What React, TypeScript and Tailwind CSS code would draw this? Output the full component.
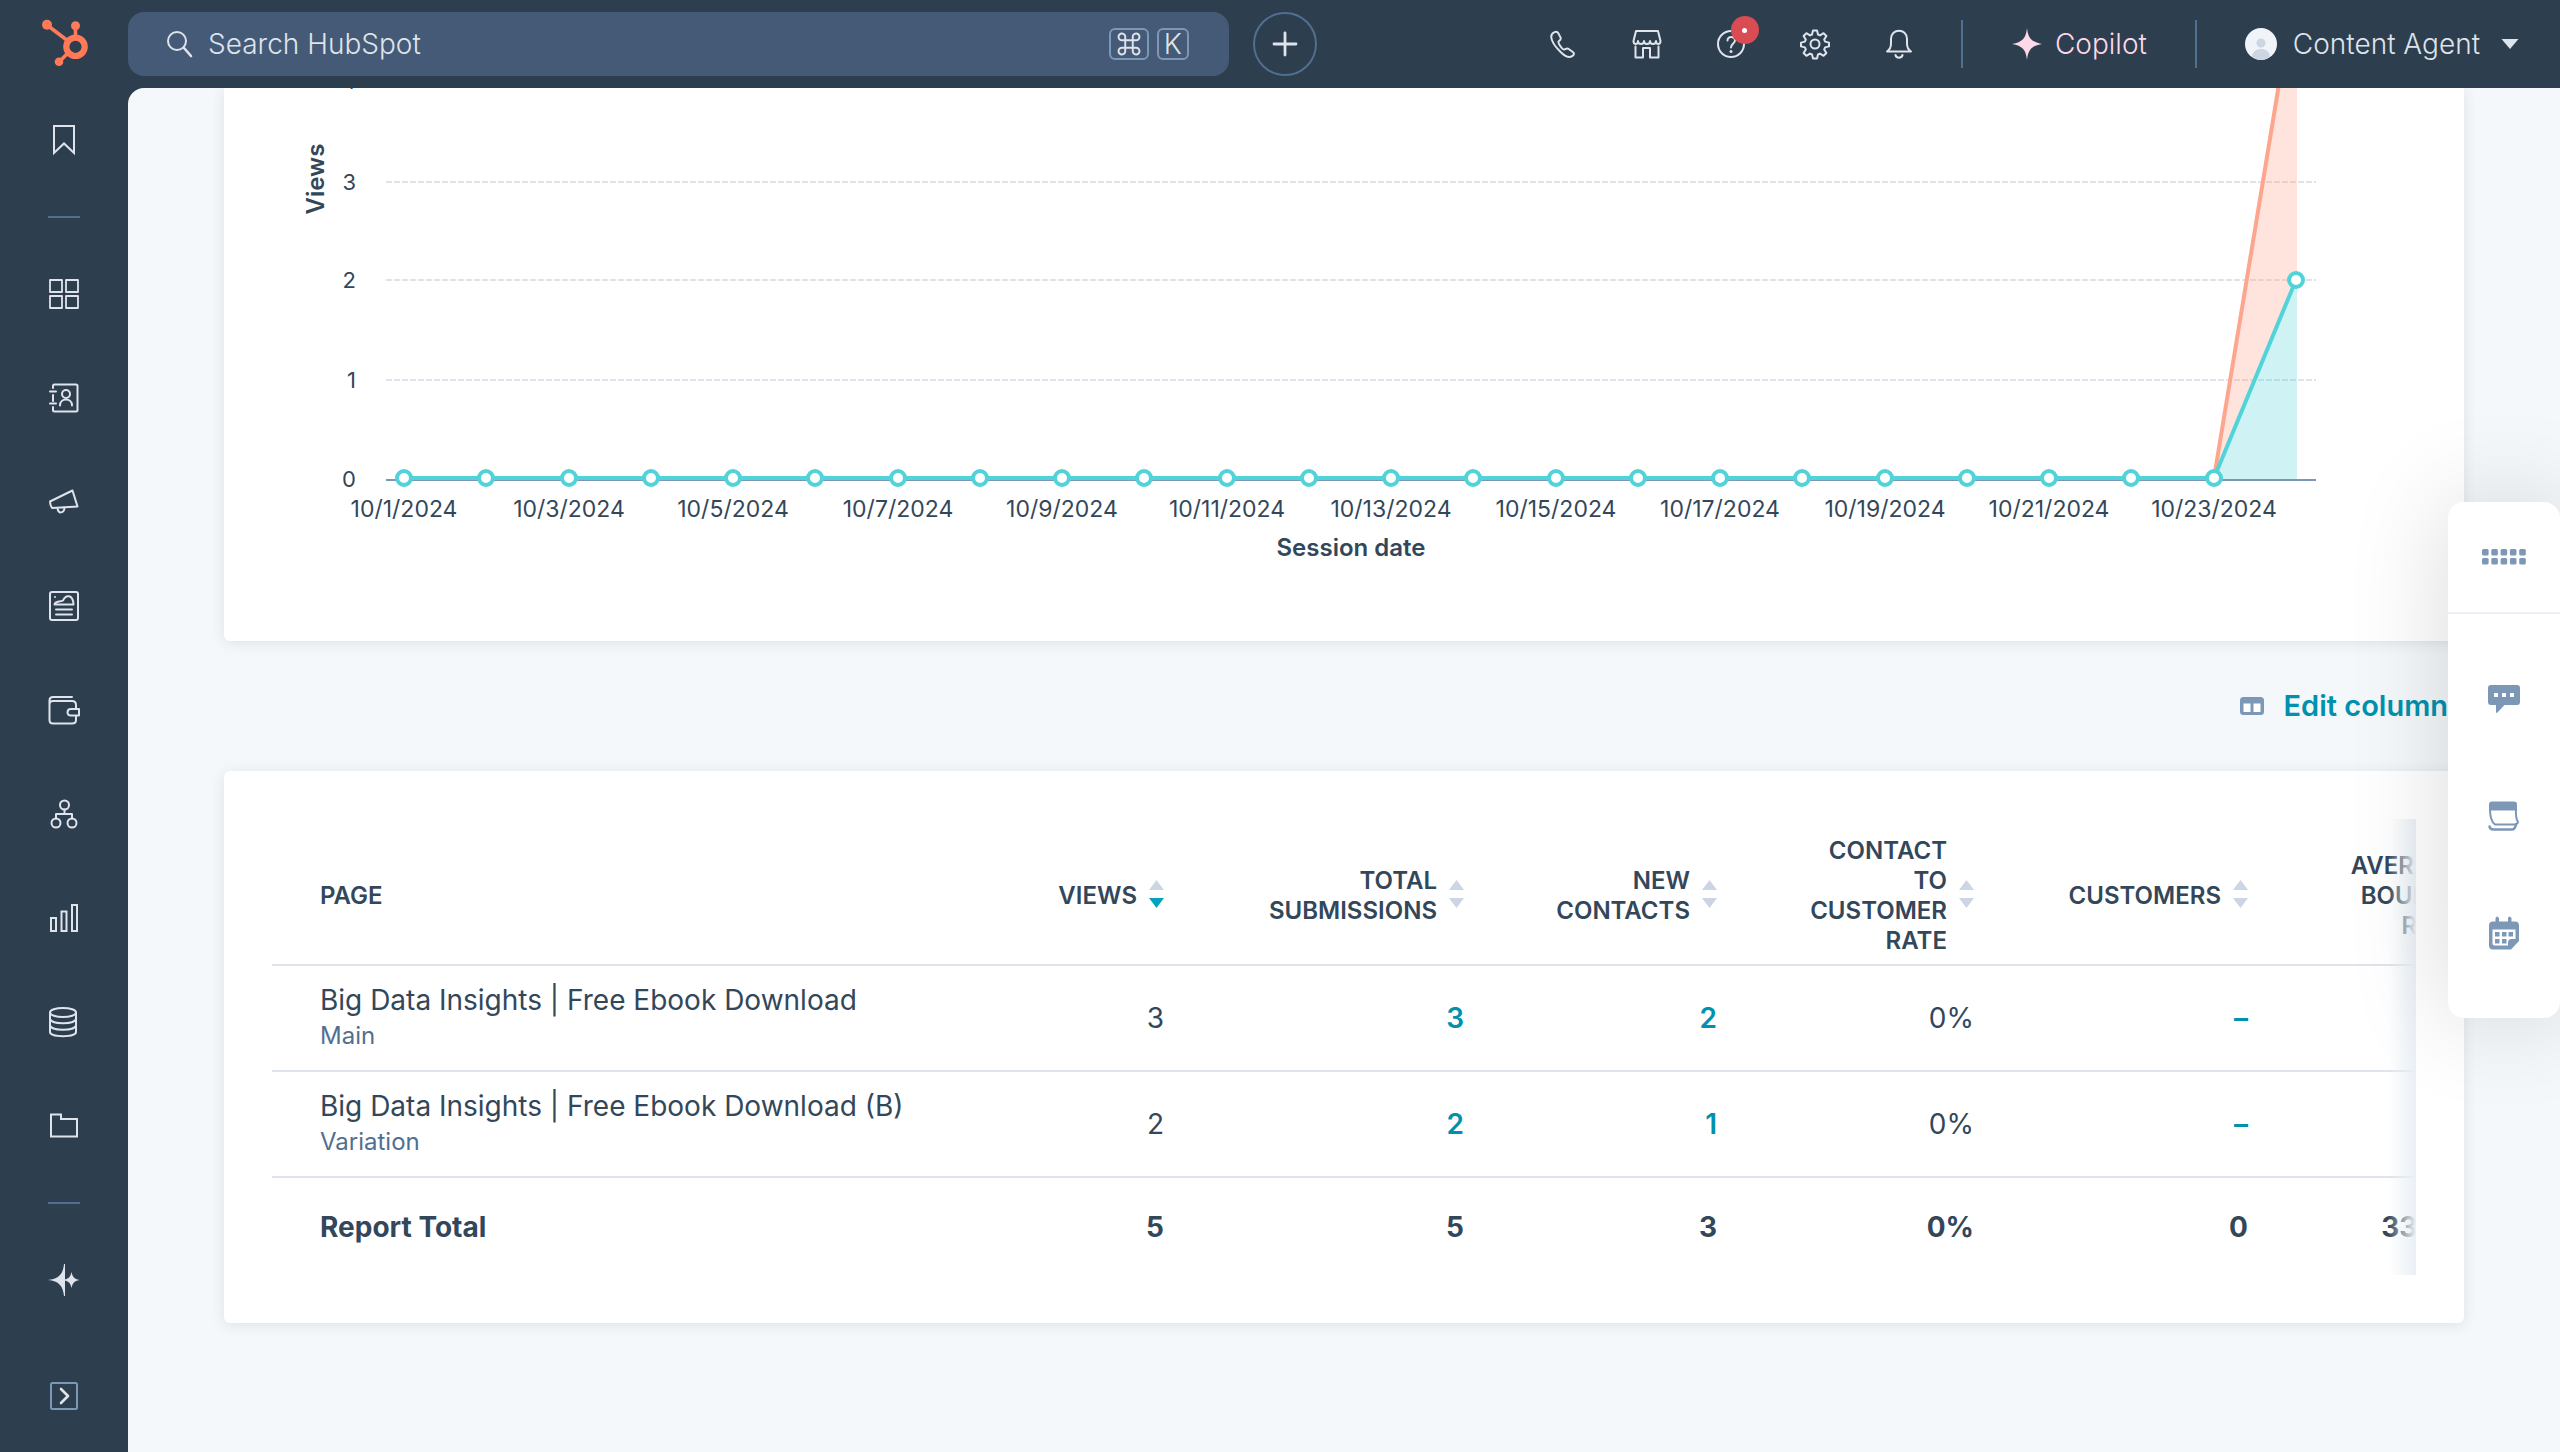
import type { ReactNode } from 'react'

const Icon = ({ children, size = 32 }: { children: ReactNode; size?: number }) => (
    <svg
        width={size}
        height={size}
        viewBox="0 0 32 32"
        fill="none"
        stroke="currentColor"
        strokeWidth="2"
        strokeLinejoin="round"
        strokeLinecap="round"
        aria-hidden="true"
    >
        {children}
    </svg>
)

const mainNav = [
    {
        label: 'Workspaces',
        icon: (
            <Icon>
                <path strokeWidth="1.8" d="M2 2h12v12H2zM18 2h12v12H18zM2 18h12v12H2zM18 18h12v12H18z" />
            </Icon>
        ),
    },
    {
        label: 'CRM',
        icon: (
            <Icon>
                <path d="M5 6V4q0-1.500 1.500-1.500H28q1.500 0 1.500 1.500v24q0 1.500-1.500 1.500H6.500Q5 29.500 5 28v-3M5 13v6M2 9.500h6M2 21.500h6" />
                <circle cx="18" cy="12" r="4" />
                <path d="M12 23.500c0-8 12-8 12 0" />
            </Icon>
        ),
    },
    {
        label: 'Marketing',
        icon: (
            <Icon>
                <path d="M2 15.500 24.500 4.500l5 16L4 22Q2 19 2 15.500ZM9.500 22.500c1 5.500 6.500 5 7-.5" />
            </Icon>
        ),
    },
    {
        label: 'Content',
        icon: (
            <Icon>
                <rect x="2" y="2" width="28" height="28" rx="2" />
                <path d="M6.500 14.500c1-4 5-2 8.500-4 3-6.500 10-6 10.500 4zM8 19.500h16M8 24.500h16" />
                <circle cx="7" cy="7" r="1" fill="currentColor" stroke="none" />
            </Icon>
        ),
    },
    {
        label: 'Commerce',
        icon: (
            <Icon>
                <path d="M24 3H5Q1.500 3 1.500 6.500V26q0 3.500 3.500 3.500h19q4 0 4-3.500v-4M28 14.500V11q0-4-4-4H5Q1.500 7 1.500 10" />
                <path d="M31 15h-8q-3.500 0-3.500 3.300T23 21.500h8z" />
            </Icon>
        ),
    },
    {
        label: 'Automations',
        icon: (
            <Icon>
                <circle cx="16.500" cy="7" r="4.500" />
                <circle cx="8" cy="25" r="4.500" />
                <circle cx="24" cy="25" r="4.500" />
                <path d="M16.500 11.500V16M8 20.500V16h16v4.500" />
            </Icon>
        ),
    },
    {
        label: 'Reporting',
        icon: (
            <Icon>
                <path strokeLinejoin="miter" d="M3 16h5v13H3zM13.500 9.500h5V29h-5zM24 3h5v26h-5z" />
            </Icon>
        ),
    },
    {
        label: 'Data Management',
        icon: (
            <Icon>
                <ellipse cx="15" cy="6.500" rx="13" ry="4.500" />
                <path d="M2 6.500V26c0 5.500 26 5.500 26 0V6.500M2 13c1 5.500 25 5.500 26 0M2 19.500c1 5.500 25 5.500 26 0" />
            </Icon>
        ),
    },
    {
        label: 'Library',
        icon: (
            <Icon>
                <path strokeLinejoin="miter" d="M3 4.500h10V9h16v17.500H3z" />
            </Icon>
        ),
    },
]

const NavButton = ({ label, children }: { label: string; children: ReactNode }) => (
    <button aria-label={label} className="flex h-26 w-full shrink-0 items-center justify-center">
        {children}
    </button>
)

const NavDivider = () => (
    <div className="flex h-[50px] shrink-0 items-center justify-center">
        <div className="h-[2px] w-8 bg-[#516f90]" />
    </div>
)

const Sidebar = () => {
    return (
        <nav className="flex w-32 shrink-0 flex-col text-[#dfe3eb]">
            <NavButton label="Bookmarks">
                <Icon>
                    <path strokeLinejoin="miter" d="M6 2h20v27l-10-9.500L6 29z" />
                </Icon>
            </NavButton>
            <NavDivider />
            {mainNav.map((item) => (
                <NavButton key={item.label} label={item.label}>
                    {item.icon}
                </NavButton>
            ))}
            <NavDivider />
            <NavButton label="Breeze">
                <Icon>
                    <path fill="currentColor" stroke="none" d="M0 16C11 15 15 10 16 0h1v32h-1C15 22 11 17 0 16Z" />
                    <path fill="currentColor" stroke="none" d="M16 15.500c5-.5 6.500-3 7.500-7.500 1 4.500 2.500 7 8 8-5.500 1-7 3.500-8 8-1-4.500-2.500-7-7.500-7.500z" />
                </Icon>
            </NavButton>
            <div className="flex flex-1 items-center justify-center pt-2">
                <button aria-label="Expand menu">
                    <Icon>
                        <rect x="3" y="3" width="26" height="26" rx="1.500" stroke="#7c98b6" />
                        <path strokeWidth="2.600" d="m13 9 7 7-7 7" />
                    </Icon>
                </button>
            </div>
        </nav>
    )
}

const Logo = () => (
    <svg width="50" height="52" viewBox="40 18 50 52" fill="none" stroke="#ff7a59" aria-hidden="true">
        <circle cx="76.500" cy="46.800" r="9.200" strokeWidth="6.200" />
        <path strokeWidth="3.600" d="M48 25l21 16M76.500 26v12M60 62l9-9" />
        <circle cx="48" cy="24.700" r="5" fill="#ff7a59" stroke="none" />
        <circle cx="76.500" cy="25.800" r="4.500" fill="#ff7a59" stroke="none" />
        <circle cx="60" cy="61.800" r="4.300" fill="#ff7a59" stroke="none" />
    </svg>
)

const HeaderButton = ({ label, children }: { label: string; children: ReactNode }) => (
    <button aria-label={label} className="relative flex h-16 w-21 items-center justify-center">
        {children}
    </button>
)

const Header = () => {
    return (
        <header className="flex h-22 shrink-0 items-center text-[28px] font-light text-[#dfe3eb]">
            <a href="#home" aria-label="Home" className="flex w-32 shrink-0 justify-center">
                <Logo />
            </a>
            <div className="flex h-16 w-[43%] items-center gap-3 rounded-2xl bg-[#445a76] pr-10 pl-9">
                <label htmlFor="search">
                    <Icon>
                        <circle cx="13" cy="13" r="9" />
                        <path strokeWidth="2.600" d="m20 20 7 8" />
                    </Icon>
                </label>
                <input
                    id="search"
                    aria-label="Search HubSpot"
                    placeholder="Search HubSpot"
                    className="min-w-0 flex-1 bg-transparent outline-none placeholder:text-[#dfe3eb]"
                />
                <div className="flex gap-2">
                    <kbd className="flex h-8 w-10 items-center justify-center rounded-md border-2 border-[#7c98b6]">
                        <Icon size={24}>
                            <path
                                strokeWidth="2.600"
                                d="M11 11h10v10H11zM11 11H7a4.500 4.500 0 1 1 4-4zM21 11V7a4.500 4.500 0 1 1 4 4zM21 21h4a4.500 4.500 0 1 1-4 4zM11 21v4a4.500 4.500 0 1 1-4-4z"
                            />
                        </Icon>
                    </kbd>
                    <kbd className="flex h-8 w-8 items-center justify-center rounded-md border-2 border-[#7c98b6] font-[Inter,sans-serif] text-[28px] leading-8">
                        K
                    </kbd>
                </div>
            </div>
            <button
                aria-label="Create"
                className="ml-6 flex h-16 w-16 items-center justify-center rounded-full border-2 border-[#516f90]"
            >
                <Icon>
                    <path strokeWidth="2.800" d="M16 5v22M5 16h22" />
                </Icon>
            </button>
            <div className="ml-auto flex items-center pr-10">
                <HeaderButton label="Calling">
                    <Icon>
                        <path d="M7.500 4.200c2-1 3-.4 4 1.400l2 3.800c.7 1.600.2 2.500-1.600 3.700-1 .8-.6 2 1 4.400 1.700 2.500 3.400 4.500 4.600 4 1.700-.8 2.800-1.600 4.200-.5l4.400 3.200c1.500 1.200.8 3-1 4-3 1.800-7 .3-11.500-4.200C8 18.500 4.500 13 4.200 9c0-2.400 1-3.800 3.300-4.800Z" />
                    </Icon>
                </HeaderButton>
                <HeaderButton label="Marketplaces">
                    <Icon>
                        <path d="M5 3h22l2.500 10c0 4-4.500 4-4.500 0 0 4-6 4-6 0 0 4-6 4-6 0 0 4-6 4-6 0 0 4-4.500 4-4.500 0zM4.500 18.500v11H12V20h7v9.500h8.500v-11" />
                    </Icon>
                </HeaderButton>
                <HeaderButton label="Help">
                    <Icon>
                        <circle cx="16" cy="16" r="13" />
                        <path d="M12.500 12.500c0-5 7.500-4.500 7.500 0 0 3-4 3-4 7" />
                        <circle cx="16" cy="23.500" r="1.500" fill="currentColor" stroke="none" />
                    </Icon>
                    <span className="absolute top-1 right-[14px] flex h-7 w-7 items-center justify-center rounded-full bg-[#d94c53]">
                        <span className="h-[5px] w-[5px] rounded-full bg-white" />
                    </span>
                </HeaderButton>
                <HeaderButton label="Settings">
                    <Icon>
                        <circle cx="16" cy="16" r="4.500" />
                        <path d="M14 2.500h4l1 4 2 .9 3.600-2.200 2.800 2.800-2.200 3.600.9 2 3.900 1v3.800l-3.900 1-.9 2 2.200 3.600-2.800 2.800-3.600-2.200-2 .9-1 4h-4l-1-4-2-.9-3.600 2.200-2.800-2.800 2.200-3.600-.9-2-3.900-1v-3.800l3.900-1 .9-2L4.600 8l2.800-2.800L11 7.400l2-.9z" />
                    </Icon>
                </HeaderButton>
                <HeaderButton label="Notifications">
                    <Icon>
                        <path d="M4 23.500h24c-3-2-4-4-4-8V11c0-11-16-11-16 0v4.500c0 4-1 6-4 8ZM12.500 27c.5 3.500 6.500 3.500 7 0" />
                    </Icon>
                </HeaderButton>
                <div className="ml-5 h-12 w-[2px] bg-[#516f90]" />
                <button className="mx-12 flex items-center gap-3 text-[#fcd9e7]">
                    <Icon>
                        <path fill="currentColor" stroke="none" d="M16 0c1.200 10.500 4.500 14 15 16-10.500 2-13.800 5.500-15 16C14.800 21.500 11.500 18 1 16 11.500 14 14.800 10.500 16 0Z" />
                    </Icon>
                    Copilot
                </button>
                <div className="h-12 w-[2px] bg-[#516f90]" />
                <button className="ml-12 flex items-center gap-4">
                    <svg width="32" height="32" viewBox="0 0 32 32" aria-hidden="true">
                        <circle cx="16" cy="16" r="16" fill="#f0f4f8" />
                        <circle cx="16" cy="15" r="4.500" fill="#cbd6e2" />
                        <path fill="#cbd6e2" d="M7 28.500C8 18.500 24 18.500 25 28.500 20 33 12 33 7 28.500Z" />
                    </svg>
                    <span>Content Agent</span>
                    <svg width="20" height="12" viewBox="0 0 20 12" className="ml-1" aria-hidden="true">
                        <path fill="currentColor" d="M1.500 1h17L10 11z" />
                    </svg>
                </button>
            </div>
        </header>
    )
}

const AXIS_Y = 391
const points = Array.from({ length: 24 }, (_, i) => ({
    x: Math.round(180 + i * 82.26),
    y: i === 23 ? AXIS_Y - 199 : AXIS_Y - 1,
}))
const gridLines = [
    { value: 3, y: 94 },
    { value: 2, y: 192 },
    { value: 1, y: 292 },
]

const ViewsChart = () => {
    return (
        <section className="rounded-b-md bg-white shadow-[0_2px_14px_rgba(45,62,80,0.12)]">
            <svg viewBox="0 0 2240 553" className="block h-auto w-full" fontFamily="Inter, sans-serif" fill="#33475b">
                <text x="100" y="91" textAnchor="middle" fontSize="24" fontWeight="600" transform="rotate(-90 100 91)">
                    Views
                </text>
                <text x="132" y="1" textAnchor="end" fontSize="22">4</text>
                {gridLines.map((line) => (
                    <g key={line.value}>
                        <text x="132" y={line.y + 8} textAnchor="end" fontSize="22">
                            {line.value}
                        </text>
                        <path d={`M162 ${line.y}H2092`} stroke="#dfe3eb" strokeWidth="2" strokeDasharray="6 2" />
                    </g>
                ))}
                <text x="132" y={AXIS_Y + 8} textAnchor="end" fontSize="22">0</text>
                <path d="M1991 391 2073 -107V192z" fill="#fea58e" fillOpacity="0.3" />
                <path d="M1991 391 2073 192V391z" fill="#51d3d9" fillOpacity="0.28" />
                <path d="M162 392H2092" stroke="#7c98b6" strokeWidth="2" />
                <path d="M1990 390 2072 -107" stroke="#fea58e" strokeWidth="4" />
                <path d={'M' + points.map((p) => `${p.x} ${p.y}`).join('L')} fill="none" stroke="#51d3d9" strokeWidth="4" />
                {points.map((p, i) => (
                    <g key={p.x}>
                        <circle cx={p.x} cy={p.y} r="7" fill="#fff" stroke="#51d3d9" strokeWidth="4" />
                        {i % 2 === 0 && (
                            <text x={p.x} y="429" textAnchor="middle" fontSize="23">
                                10/{i + 1}/2024
                            </text>
                        )}
                    </g>
                ))}
                <text x="1127" y="468" textAnchor="middle" fontSize="24" fontWeight="600">
                    Session date
                </text>
            </svg>
        </section>
    )
}

const SortArrows = ({ down }: { down?: boolean }) => (
    <svg width="15" height="28" viewBox="0 0 15 28" className="mb-1 shrink-0" fill="#cbd6e2" aria-hidden="true">
        <path d="M7.500 0 15 10H0z" />
        <path d="M0 18h15L7.500 28z" fill={down ? '#00a4bd' : '#cbd6e2'} />
    </svg>
)

const columns = [
    { lines: ['Views'], width: 'w-[206px]', sorted: true },
    { lines: ['Total', 'Submissions'], width: 'w-[300px]' },
    { lines: ['New', 'Contacts'], width: 'w-[253px]' },
    { lines: ['Contact', 'to', 'Customer', 'Rate'], width: 'w-[257px]' },
    { lines: ['Customers'], width: 'w-[274px]' },
    { lines: ['Average', 'Bounce', 'Rate'], width: 'w-[242px]' },
]

const rows = [
    { name: 'Big Data Insights | Free Ebook Download', type: 'Main', cells: ['3', '3', '2', '0%', '–', ''] },
    { name: 'Big Data Insights | Free Ebook Download (B)', type: 'Variation', cells: ['2', '2', '1', '0%', '–', ''] },
]
const totals = ['5', '5', '3', '0%', '0', '33.33%']
const linkColumns = [1, 2, 4]

const PagesTable = () => {
    return (
        <section className="rounded-md bg-white p-12 shadow-[0_2px_14px_rgba(45,62,80,0.12)]">
            <div className="relative overflow-hidden">
                <table className="w-[2266px] table-fixed text-[#33475b]">
                    <thead>
                        <tr className="h-[146px] border-b-2 border-[#dfe3eb] text-2xl uppercase">
                            <th className="px-12 pt-2 text-left leading-[30px] font-semibold">Page</th>
                            {columns.map((col) => (
                                <th key={col.lines.join(' ')} className={`${col.width} pt-2 pr-12 font-semibold`}>
                                    <button className="flex w-full items-center justify-end gap-3 text-right leading-[30px] uppercase">
                                        <span>
                                            {col.lines.map((line) => (
                                                <span key={line} className="block">
                                                    {line}
                                                </span>
                                            ))}
                                        </span>
                                        <SortArrows down={col.sorted} />
                                    </button>
                                </th>
                            ))}
                        </tr>
                    </thead>
                    <tbody>
                        {rows.map((row) => (
                            <tr key={row.name} className="h-[106px] border-b-2 border-[#dfe3eb] text-[28px]">
                                <td className="px-12">
                                    <div className="leading-9">{row.name}</div>
                                    <div className="text-2xl leading-9 text-[#516f90]">{row.type}</div>
                                </td>
                                {row.cells.map((cell, i) => (
                                    <td key={i} className="pr-12 text-right">
                                        {linkColumns.includes(i) ? (
                                            <a href="#contacts" className="font-semibold text-[#0091ae]">
                                                {cell}
                                            </a>
                                        ) : (
                                            cell
                                        )}
                                    </td>
                                ))}
                            </tr>
                        ))}
                    </tbody>
                    <tfoot>
                        <tr className="h-[98px] text-[28px] font-bold">
                            <td className="px-12">Report Total</td>
                            {totals.map((total, i) => (
                                <td key={i} className="pr-12 text-right">
                                    {total}
                                </td>
                            ))}
                        </tr>
                    </tfoot>
                </table>
                <div className="absolute inset-y-0 right-0 w-7 bg-linear-to-r from-[#eaf0f6]/0 to-[#eaf0f6]" />
            </div>
        </section>
    )
}

const ToolPanel = () => {
    return (
        <aside className="absolute top-[502px] right-0 flex w-28 flex-col items-center rounded-2xl bg-white text-[#7c98b6] shadow-[0_0_100px_rgba(0,0,0,0.15)]">
            <button aria-label="Move panel" className="flex h-28 w-full items-center justify-center border-b-2 border-[#eaf0f6]">
                <svg width="44" height="16" viewBox="0 0 44 16" fill="currentColor" aria-hidden="true">
                    {[0, 9.300, 18.600, 27.900, 37.200].map((x) => (
                        <g key={x}>
                            <rect x={x} y="0" width="6.600" height="6.600" rx="1.500" />
                            <rect x={x} y="9" width="6.600" height="6.600" rx="1.500" />
                        </g>
                    ))}
                </svg>
            </button>
            <div className="flex flex-col gap-[69px] py-[61px]">
                <button aria-label="Chat" className="flex h-12 items-center">
                    <svg width="32" height="28" viewBox="0 0 32 28" fill="currentColor" aria-hidden="true">
                        <path d="M3 0h26q3 0 3 3v14q0 3-3 3H16.500l-7 7.500q-1.500 1-1.500-.5v-7H3q-3 0-3-3V3q0-3 3-3Z" />
                        <path fill="#fff" d="M6 8h4v4H6zM14 8h4v4h-4zM22 8h4v4h-4z" />
                    </svg>
                </button>
                <button aria-label="Notebook" className="flex h-12 items-center">
                    <svg width="32" height="30" viewBox="0 0 32 30" fill="none" stroke="currentColor" strokeWidth="2" aria-hidden="true">
                        <path fill="currentColor" d="M2 8.500V3.500Q2 1.500 4 1.500h22q2 0 2 2v5z" />
                        <path strokeLinejoin="round" d="M2 8c0 8 1.500 13 5 15.500h20q3-1 3-2.500c-2-3-2.500-6-2-13" />
                        <path strokeWidth="2.500" strokeLinecap="round" d="M1.500 25.500q.5 3 4 3H24q3 0 4-5" />
                    </svg>
                </button>
                <button aria-label="Calendar" className="flex h-12 items-center">
                    <svg width="32" height="34" viewBox="0 0 32 34" fill="currentColor" aria-hidden="true">
                        <path d="M5 5.500h2.500V2q1.500-3 3.500 0v3.500h9V2q1.500-3 3.500 0v3.500H27q4 0 4 4V25l-8 8.500H5q-4 0-4-4v-20q0-4 4-4Z" />
                        <path fill="#fff" d="M4.500 13.500h23V23h-4q-3.500 0-3.500 3.500v3H6.500q-2 0-2-2z" />
                        <path d="M7 16h4.500v4.500H7zM14 16h4.500v4.500H14zM20.500 16H25v4.500h-4.500zM7 23h4.500v4.500H7zM14 23h4.500v4.500H14z" />
                    </svg>
                </button>
            </div>
        </aside>
    )
}

const App = () => {
    return (
        <div className="relative flex h-screen flex-col overflow-hidden bg-[#2d3e4e] font-[Inter,sans-serif]">
            <Header />
            <div className="flex min-h-0 flex-1">
                <Sidebar />
                <main className="min-w-0 flex-1 overflow-hidden rounded-tl-2xl bg-[#f5f8fa] px-24">
                    <ViewsChart />
                    <div className="flex h-[130px] items-center justify-end">
                        <button className="flex items-center gap-5 text-[29px] leading-9 font-semibold text-[#0091ae]">
                            <svg width="24" height="18" viewBox="0 0 24 18" aria-hidden="true">
                                <rect width="24" height="18" rx="3.500" fill="#7c98b6" />
                                <path fill="#fff" d="M3.500 6.500h7V15h-7zM13.500 6.500h7V15h-7z" />
                            </svg>
                            Edit columns
                        </button>
                    </div>
                    <PagesTable />
                </main>
            </div>
            <ToolPanel />
        </div>
    )
}

export default App
